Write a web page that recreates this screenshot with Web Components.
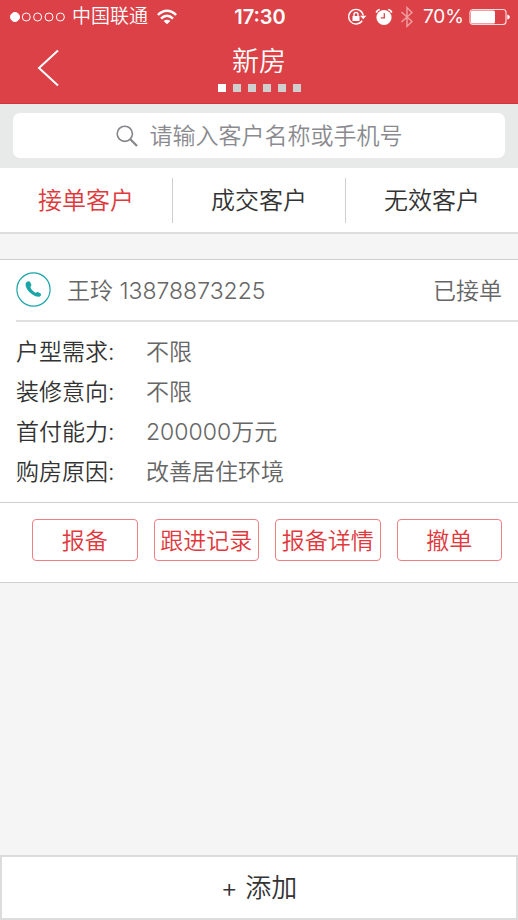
<!DOCTYPE html>
<html lang="zh-CN">
<head>
<meta charset="utf-8">
<meta name="viewport" content="width=device-width, initial-scale=1">
<title>新房</title>
<style>
  :root {
    --red: #db4146;
    --accent: #e0383c;
    --line: #cfcfcf;
    --teal: #1aa5a9;
    --ink: #333;
    --muted: #666;
  }
  body {
    margin: 0;
    min-height: 100vh;
    display: flex;
    flex-direction: column;
    background: #f5f5f5;
    color: var(--ink);
    font-family: Inter, "Noto Sans CJK SC", sans-serif;
    font-weight: 350;
    font-size: 23px;
  }
  customer-card { margin-top: 25px; }
  add-bar { margin-top: auto; }
</style>
</head>
<body>
<status-bar><span slot="carrier">中国联通</span><span slot="time">17:30</span><span slot="level">70%</span></status-bar>
<nav-bar pages="6">新房</nav-bar>
<search-box placeholder="请输入客户名称或手机号"></search-box>
<tab-bar>
  <tab-item active>接单客户</tab-item>
  <tab-item>成交客户</tab-item>
  <tab-item>无效客户</tab-item>
</tab-bar>
<customer-card>
  <span slot="name">王玲 13878873225</span>
  <span slot="state">已接单</span>
  <info-row label="户型需求:">不限</info-row>
  <info-row label="装修意向:">不限</info-row>
  <info-row label="首付能力:">200000万元</info-row>
  <info-row label="购房原因:">改善居住环境</info-row>
  <action-button slot="actions">报备</action-button>
  <action-button slot="actions">跟进记录</action-button>
  <action-button slot="actions">报备详情</action-button>
  <action-button slot="actions">撤单</action-button>
</customer-card>
<add-bar>+ 添加</add-bar>

<script>
const define = (name, render) => customElements.define(name, class extends HTMLElement {
  constructor() {
    super();
    this.attachShadow({ mode: 'open' });
  }
  connectedCallback() {
    this.shadowRoot.innerHTML = '<style>:host,*{box-sizing:border-box}button{font:inherit;color:inherit;margin:0;padding:0;background:none;border:0;cursor:pointer}svg{display:block;flex:none}</style>' + render(this);
  }
});

define('status-bar', () => `
<style>
  :host { display: grid; grid-template-columns: 1fr auto 1fr; align-items: center; height: 34px; padding: 0 8px 0 10px; background: var(--red); color: #fff; font-size: 19px; line-height: 34px; }
  div { display: flex; align-items: center; }
  .left { gap: 7px; }
  .left svg:last-child { margin-left: 2px; }
  .time { font-weight: 600; font-size: 20px; }
  .right { justify-content: flex-end; gap: 5px; font-weight: 400; }
  .bt { margin: 0 4px 0 2px; }
  .lock { margin-right: 3px; }
</style>
<div class="left">
  <svg width="55" height="12" viewBox="0 0 55 12" fill="none" stroke="#fff"><circle cx="5" cy="6" r="4.5" fill="#fff"/><circle cx="16.300" cy="6" r="4"/><circle cx="27.600" cy="6" r="4"/><circle cx="39" cy="6" r="4"/><circle cx="50.400" cy="6" r="4"/></svg>
  <slot name="carrier"></slot>
  <svg width="20" height="16" viewBox="0 0 20 16" fill="none" stroke="#fff" stroke-width="2.400"><path d="M.9 6Q5 1.800 10 1.800T19.100 6M4 9.600Q6.800 6.700 10 6.700T16 9.600"/><path d="M10 15.300L6.600 12Q10 9.400 13.400 12Z" fill="#fff" stroke="none"/></svg>
</div>
<div class="time"><slot name="time"></slot></div>
<div class="right">
  <svg class="lock" width="20" height="18" viewBox="0 0 20 18" fill="none" stroke="#fff" stroke-width="1.400"><path d="M15.200 12.600A7.300 7.300 0 1 1 16.200 7.500"/><path d="M13 7.700H19.400L16.200 11.300Z" fill="#fff" stroke="none"/><rect x="5.500" y="8" width="7" height="5" fill="#fff" stroke="none"/><path d="M7 8V6.500a2 2 0 0 1 4 0V8"/></svg>
  <svg width="18" height="18" viewBox="0 0 18 18"><circle cx="9" cy="9.500" r="7.600" fill="#fff"/><path d="M1.300 4.700Q2 2 4.800 1.500M16.700 4.700Q16 2 13.200 1.500" fill="none" stroke="#fff" stroke-width="1.600"/><path d="M9.300 5.200V9.800H5.800" fill="none" stroke="#db4146" stroke-width="1.300"/></svg>
  <svg class="bt" width="14" height="22" viewBox="0 0 14 22" fill="none" stroke="#eea0a3" stroke-width="1.400"><path d="M1.500 6L12 15.500L7 20.300V1.700L12 6.500L1.500 16"/></svg>
  <slot name="level"></slot>
  <svg width="41" height="18" viewBox="0 0 41 18"><rect x="1" y="1.500" width="36" height="15" rx="3" fill="none" stroke="#fff" stroke-opacity=".8" stroke-width="1.200"/><rect x="2" y="2.500" width="24" height="13" rx="1.500" fill="#fff"/><path d="M38.300 6.500Q40.800 7 40.800 9T38.300 11.500Z" fill="#fff"/></svg>
</div>`);

define('nav-bar', el => `
<style>
  :host { display: grid; grid-template-columns: 1fr auto 1fr; height: 70px; padding: 8px 32px 0; background: var(--red); color: #fff; border-bottom: 1px solid #d23439; }
  button { justify-self: start; align-self: start; padding: 6px 4px; }
  .mid { display: flex; flex-direction: column; align-items: center; gap: 2px; }
  h1 { margin: 0; font-size: 27px; line-height: 40px; font-weight: 350; }
  .dots { display: flex; gap: 7px; }
  i { width: 8px; height: 8px; background: #cfcfcf; }
  i:first-child { background: #fff; }
</style>
<button aria-label="返回"><svg width="24" height="38" viewBox="0 0 24 38" fill="none" stroke="#fff" stroke-width="2"><path d="M22 2.500L3 20L22 37.500"/></svg></button>
<div class="mid"><h1><slot></slot></h1><div class="dots">${'<i></i>'.repeat(+el.getAttribute('pages'))}</div></div>`);

define('search-box', el => `
<style>
  :host { display: block; padding: 9px 13px 10px; background: #e8e9e9; color: #8a8a8f; }
  label { display: flex; align-items: center; justify-content: center; gap: 12px; height: 45px; border-radius: 7px; background: #fff; }
  input { font: inherit; color: var(--ink); width: 11em; height: 40px; padding: 0; border: 0; outline: 0; background: none; }
  input::placeholder { color: #8a8a8f; opacity: 1; }
</style>
<label><svg width="22" height="22" viewBox="0 0 22 22" fill="none" stroke="#85858a" stroke-width="1.600"><circle cx="8.800" cy="8.800" r="7.600"/><path d="M14.300 14.300L21 21" stroke-width="2.200"/></svg>
<input type="text" aria-label="${el.getAttribute('placeholder')}" placeholder="${el.getAttribute('placeholder')}"></label>`);

define('tab-bar', () => `
<style>
  :host { display: flex; padding: 10px 0 9px; background: #fff; border-bottom: 2px solid #dedede; }
</style>
<slot></slot>`);

define('tab-item', el => `
<style>
  :host { flex: 1; display: block; border-right: 1px solid var(--line); font-size: 24px; }
  :host(:last-child) { border-right: 0; }
  :host([active]) { color: var(--accent); }
  button { display: block; width: 100%; height: 45px; line-height: 44px; }
</style>
<button aria-pressed="${el.hasAttribute('active')}"><slot></slot></button>`);

define('customer-card', () => `
<style>
  :host { display: block; background: #fff; border: solid var(--line); border-width: 1px 0; }
  header { display: flex; align-items: center; height: 62px; margin-left: 16px; padding: 0 16px 2px 0; border-bottom: 2px solid #e0e0e0; color: var(--muted); }
  .name { flex: 1; margin-left: 16px; }
  .info { padding: 10px 16px; }
  footer { display: flex; gap: 16px; padding: 16px 16px 21px 32px; border-top: 1px solid var(--line); }
</style>
<header>
  <button aria-label="拨打电话"><svg width="35" height="35" viewBox="0 0 35 35"><circle cx="17.500" cy="17.500" r="16.600" fill="none" stroke="var(--teal)" stroke-width="1.200"/><path d="M10.700 10.100C12 9 13.600 9 14.200 10.300L15.300 12.500C15.800 13.600 14.300 14.300 14.400 15.100C15 17.500 17 19.600 19.400 20.700C20.300 21 20.800 19.700 21.800 20L24.200 21.200C25.600 22 25.300 23.600 23.800 24.400C22 25.300 18.600 24.300 15.400 21.800C12.300 19.400 9.900 16 9.600 13.200C9.500 12 9.700 10.900 10.700 10.100Z" fill="var(--teal)"/></svg></button>
  <div class="name"><slot name="name"></slot></div>
  <slot name="state"></slot>
</header>
<div class="info"><slot></slot></div>
<footer><slot name="actions"></slot></footer>`);

define('info-row', el => `
<style>
  :host { display: flex; line-height: 40px; }
  .label { width: 130px; }
  .value { color: var(--muted); }
</style>
<span class="label">${el.getAttribute('label')}</span><span class="value"><slot></slot></span>`);

define('action-button', () => `
<style>
  :host { display: block; flex: 1; color: var(--accent); }
  button { display: block; width: 100%; height: 42px; line-height: 42px; border: 1px solid #ec8082; border-radius: 4px; white-space: nowrap; }
</style>
<button><slot></slot></button>`);

define('add-bar', () => `
<style>
  :host { display: block; background: #fff; font-size: 26px; }
  button { display: block; width: 100%; height: 65px; line-height: 62px; border: 2px solid #dcdcdc; }
</style>
<button><slot></slot></button>`);
</script>
</body>
</html>
